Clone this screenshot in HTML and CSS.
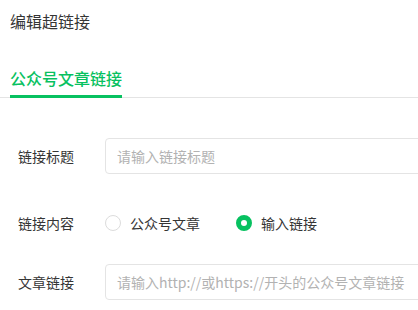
FILE: index.html
```html
<!DOCTYPE html>
<html>
<head>
    <title>编辑超链接</title>
    <meta name="viewport" content="width=device-width, initial-scale=1">
    <link rel="stylesheet" href="styles.css">
</head>
<body>
    <div class="dialog">
        <div class="title">编辑超链接</div>

        <div class="tabs">
            <div class="tab active">公众号文章链接</div>
        </div>

        <form class="form">
            <div class="row row-title">
                <label class="label">链接标题</label>
                <input type="text" class="input" placeholder="请输入链接标题">
            </div>

            <div class="row row-type">
                <label class="label">链接内容</label>
                <div class="radios">
                    <span class="radio"><i class="dot"></i>公众号文章</span>
                    <span class="radio checked"><i class="dot"></i>输入链接</span>
                </div>
            </div>

            <div class="row row-url">
                <label class="label">文章链接</label>
                <input type="text" class="input" placeholder="请输入http://或https://开头的公众号文章链接">
            </div>
        </form>
    </div>
</body>
</html>
```

FILE: styles.css
```css
body {
    margin: 0;
    background-color: #fff;
    color: #333;
    font-family: "Noto Sans CJK SC", "Liberation Sans", sans-serif;
    overflow: hidden;
}

.dialog {
    width: 100%;
    overflow: hidden;
}

.title {
    padding: 10px 10px 0 10px;
    font-size: 16px;
    line-height: 22px;
    color: #353535;
}

.tabs {
    display: flex;
    margin-top: 35px;
    border-bottom: 1px solid #e4e4e4;
}

.tab {
    margin-left: 10px;
    padding-bottom: 6px;
    font-size: 16px;
    line-height: 22px;
    font-weight: 500;
    color: #07c160;
    border-bottom: 3px solid #07c160;
    margin-bottom: -1px;
}

.form {
    padding: 40px 0 0 18px;
    margin: 0;
}

.row {
    display: flex;
    align-items: center;
}

.row-type {
    margin-top: 37px;
    height: 24px;
}

.row-url {
    margin-top: 29px;
}

.label {
    width: 87px;
    flex-shrink: 0;
    font-size: 14px;
    color: #353535;
}

.input {
    flex: 1;
    min-width: 0;
    margin-right: -30px;
    height: 36px;
    box-sizing: border-box;
    padding: 0 11px;
    border: 1px solid #e4e4e4;
    border-radius: 4px;
    font-family: inherit;
    font-size: 14px;
    color: #333;
    outline: none;
}

.input::placeholder {
    color: #b2b2b2;
}

.radios {
    display: flex;
    align-items: center;
}

.radio {
    display: flex;
    align-items: center;
    font-size: 14px;
    color: #353535;
    margin-right: 36px;
}

.dot {
    width: 16px;
    height: 16px;
    box-sizing: border-box;
    border: 1px solid #dcdcdc;
    border-radius: 50%;
    margin-right: 9px;
}

.radio.checked .dot {
    border: 5px solid #07c160;
    background-color: #fff;
}
```
